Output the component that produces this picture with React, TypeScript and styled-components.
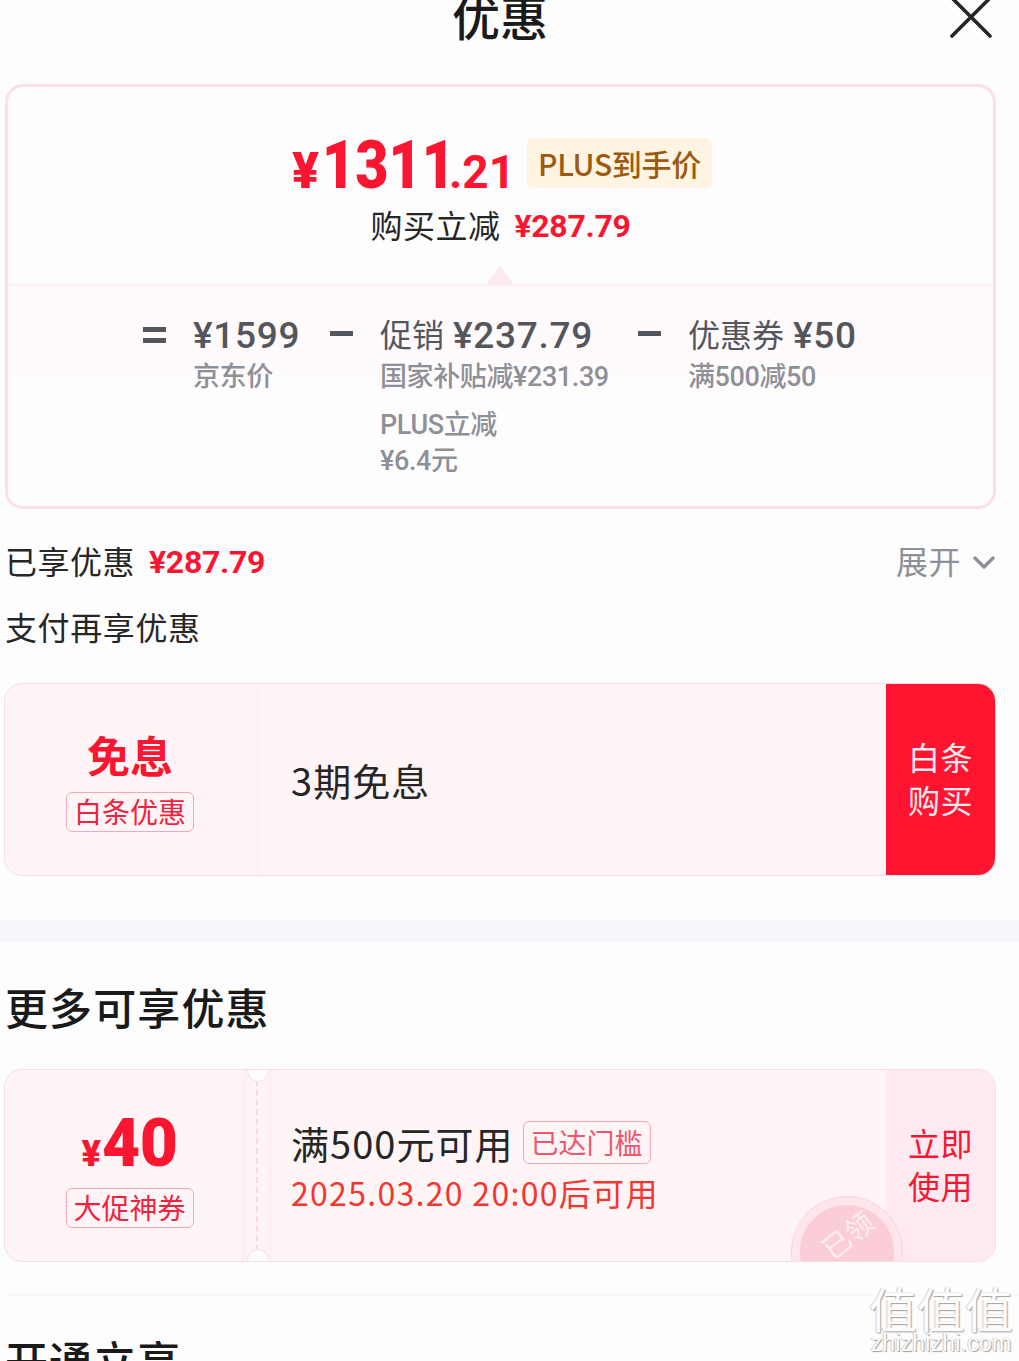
import React from "react";
import styled, { createGlobalStyle } from "styled-components";

const Global = createGlobalStyle`
  html, body { margin: 0; padding: 0; background: #fdfdfe; }
  body {
    font-family: "Noto Sans CJK SC", "Noto Sans", sans-serif;
    color: #1a1a1a;
  }
`;

const NUM = `"Roboto", "Noto Sans CJK SC", sans-serif`;

const Page = styled.div`
  position: relative;
  width: 1019px;
  height: 1361px;
  overflow: hidden;
`;

const Header = styled.header`
  height: 84px;
  padding-right: 19px;
  display: flex;
  justify-content: center;
  position: relative;
`;

const Title = styled.h1`
  margin: -21px 0 0;
  font-size: 48px;
  line-height: 72px;
  font-weight: 500;
  height: 72px;
`;

const CloseIcon = styled.svg`
  position: absolute;
  right: 26px;
  top: -5px;
  width: 44px;
  height: 44px;
`;

const SummaryCard = styled.section`
  margin: 0 23px 0 5px;
  height: 425px;
  box-sizing: border-box;
  border: 3px solid #fcdfe7;
  border-radius: 18px;
  overflow: hidden;
  display: flex;
  flex-direction: column;
`;

const SummaryTop = styled.div`
  height: 197px;
  flex: none;
  box-sizing: border-box;
  padding-top: 45px;
  display: flex;
  flex-direction: column;
  align-items: center;
`;

const PriceRow = styled.div`
  display: flex;
  align-items: center;
  height: 62px;
  padding-left: 3px;
`;

const Price = styled.div`
  display: flex;
  align-items: baseline;
  margin-top: 12px;
  color: #fa1530;
  font-family: ${NUM};
  font-weight: 900;
  line-height: 62px;
`;

const PriceSymbol = styled.span`
  font-size: 50px;
  width: 30px;
`;

const PriceInt = styled.span`
  display: inline-block;
  width: 127px;
  font-size: 66px;
  white-space: nowrap;
  transform: scaleX(0.87);
  transform-origin: left;
`;

const PriceDec = styled.span`
  display: inline-block;
  width: 63px;
  font-size: 46px;
  font-weight: 700;
  white-space: nowrap;
`;

const Tag = styled.div`
  margin-left: 15px;
  width: 185px;
  height: 50px;
  border-radius: 6px;
  background: #fff3e2;
  color: #9c5a10;
  font-size: 30px;
  line-height: 50px;
  text-align: center;
  font-weight: 500;
  letter-spacing: -0.3px;
  white-space: nowrap;
`;

const SaveRow = styled.div`
  margin-top: 5px;
  display: flex;
  align-items: center;
  gap: 14px;
  font-size: 32px;
  line-height: 46px;
  letter-spacing: 0.5px;
  color: #262626;
`;

const RedAmount = styled.span`
  padding-top: 4px;
  color: #fa1530;
  font-family: ${NUM};
  font-weight: 700;
  font-size: 32px;
  letter-spacing: -0.3px;
`;

const SummaryBottom = styled.div`
  position: relative;
  flex: 1;
  border-top: 2px solid #fdeff3;
  background: linear-gradient(#fff8fa, #fefdfe 60%);
  padding: 27px 0 0 135px;
  display: flex;
  align-items: flex-start;
`;

const Caret = styled.div`
  position: absolute;
  left: 478px;
  top: -20px;
  width: 0;
  height: 0;
  border-left: 14px solid transparent;
  border-right: 14px solid transparent;
  border-bottom: 19px solid #fdeaf0;
`;

const Op = styled.div`
  flex: none;
  width: 50px;
  height: 46px;
`;

const OpBar = styled.div<{ $double?: boolean }>`
  width: 23px;
  height: ${(p) => (p.$double ? "16px" : "5px")};
  margin-top: ${(p) => (p.$double ? "14px" : "18px")};
  border-top: 5px solid #54565c;
  border-bottom: ${(p) => (p.$double ? "5px solid #54565c" : "none")};
  box-sizing: border-box;
`;

const Col = styled.div<{ $width: number }>`
  flex: none;
  width: ${(p) => p.$width}px;
`;

const ColTitle = styled.div`
  display: flex;
  gap: 9px;
  font-size: 32px;
  line-height: 46px;
  height: 46px;
  color: #54565c;
  white-space: nowrap;
  font-weight: 400;
`;

const ColLabel = styled.span`
  margin-top: -3px;
`;

const ColAmount = styled.span`
  font-family: ${NUM};
  font-weight: 500;
  font-size: 37px;
  letter-spacing: 0.7px;
`;

const ColNote = styled.div<{ $gap?: number }>`
  margin-top: ${(p) => p.$gap ?? 0}px;
  font-size: 27px;
  line-height: 36px;
  color: #8e9097;
  white-space: nowrap;
  font-weight: 500;
  font-family: ${NUM};
  letter-spacing: -0.4px;
`;

const RowLine = styled.div`
  margin: 28px 23px 0 5px;
  height: 46px;
  display: flex;
  align-items: center;
  font-size: 32px;
  line-height: 46px;
  letter-spacing: 0.5px;
  color: #262626;
`;

const Expand = styled.div`
  margin-left: auto;
  display: flex;
  align-items: center;
  gap: 12px;
  color: #8e9097;
`;

const ChevronIcon = styled.svg`
  width: 22px;
  height: 13px;
  margin: 5px 1px 0 0;
`;

const SavedAmount = styled(RedAmount)`
  margin-left: 14px;
`;

const PlainLine = styled.div`
  margin: 20px 0 0 5px;
  font-size: 32px;
  line-height: 46px;
  letter-spacing: 0.6px;
  color: #262626;
`;

const Coupon = styled.div<{ $top: number }>`
  position: relative;
  margin: ${(p) => p.$top}px 23px 0 4px;
  height: 193px;
  box-sizing: border-box;
  border: 1px solid #f8dce4;
  border-radius: 18px;
  background: #fff5f7;
  overflow: hidden;
  display: flex;
`;

const CouponLeft = styled.div`
  flex: none;
  width: 253px;
  box-sizing: border-box;
  padding-right: 2px;
  border-right: 1px dashed #fbe3ea;
  display: flex;
  flex-direction: column;
  align-items: center;
  justify-content: center;
`;

const Ticket = styled(CouponLeft)`
  width: 237px;
  border-right: none;
  padding: 10px 0 0 12px;
`;

const Perforation = styled.div`
  flex: none;
  position: relative;
  width: 31px;
  background: linear-gradient(90deg, #fdf0f3, #fff5f7 45%, #fff5f7 55%, #fdf0f3);
  &::before {
    content: "";
    position: absolute;
    top: 10px;
    bottom: 10px;
    left: 14px;
    border-left: 2px dashed #fcd6e0;
  }
`;

const Notch = styled.div<{ $bottom?: boolean }>`
  position: absolute;
  left: 5px;
  ${(p) => (p.$bottom ? "bottom: -10px;" : "top: -10px;")}
  width: 20px;
  height: 20px;
  border-radius: 50%;
  background: #fdfdfe;
  border: 1px solid #f8dce4;
  z-index: 1;
`;

const BigLabel = styled.div`
  color: #fa1530;
  font-size: 43px;
  line-height: 52px;
  font-weight: 700;
`;

const BigAmount = styled.div`
  display: flex;
  align-items: baseline;
  color: #fa1530;
  font-family: ${NUM};
  font-weight: 900;
  line-height: 62px;
  height: 62px;
`;

const AmountSymbol = styled.span`
  font-size: 36px;
  margin-right: 1px;
`;

const AmountValue = styled.span`
  font-size: 66px;
  letter-spacing: -0.5px;
`;

const SmallTag = styled.div<{ $top: number }>`
  margin-top: ${(p) => p.$top}px;
  width: 128px;
  height: 40px;
  box-sizing: border-box;
  border: 1px solid #f3a8bb;
  border-radius: 6px;
  color: #f0223f;
  font-size: 28px;
  line-height: 37px;
  text-align: center;
  white-space: nowrap;
`;

const CouponBody = styled.div<{ $pad: number }>`
  flex: 1;
  padding-left: ${(p) => p.$pad}px;
  display: flex;
  flex-direction: column;
  justify-content: center;
  position: relative;
`;

const BodyText = styled.div`
  font-size: 38px;
  line-height: 52px;
  letter-spacing: 1.05px;
  color: #262626;
  display: flex;
  align-items: center;
  white-space: nowrap;
`;

const Threshold = styled.span`
  margin-left: 9px;
  width: 128px;
  height: 43px;
  box-sizing: border-box;
  border: 1px solid #f3a8bb;
  border-radius: 6px;
  font-size: 28px;
  line-height: 40px;
  letter-spacing: 0;
  text-align: center;
  color: #f0576c;
`;

const DateText = styled.div`
  font-size: 32px;
  line-height: 46px;
  letter-spacing: 1.3px;
  color: #f5352f;
  white-space: nowrap;
`;

const Action = styled.div<{ $solid?: boolean }>`
  flex: none;
  width: 109px;
  background: ${(p) => (p.$solid ? "#ff1530" : "#feeaf0")};
  color: ${(p) => (p.$solid ? "#ffe9ec" : "#fa1530")};
  font-size: 32px;
  line-height: 43px;
  text-align: center;
  display: flex;
  align-items: center;
  justify-content: center;
  padding-bottom: 4px;
  box-sizing: border-box;
  letter-spacing: 0.5px;
`;

const Stamp = styled.div`
  position: absolute;
  left: 787px;
  top: 127px;
  width: 110px;
  height: 110px;
  box-sizing: border-box;
  border-radius: 50%;
  border: 8px solid #fee6ec;
  box-shadow: 0 0 0 1px #fbd3dd;
  background: #fbcdd8;
  padding-top: 9px;
  z-index: 1;
`;

const StampText = styled.div`
  color: #fdeef2;
  font-size: 28px;
  line-height: 40px;
  text-align: center;
  transform: rotate(-38deg);
  white-space: nowrap;
`;

const Band = styled.div`
  margin-top: 44px;
  height: 22px;
  background: #f7f8fb;
`;

const SectionTitle = styled.h2<{ $top: number }>`
  margin: ${(p) => p.$top}px 0 0 5px;
  font-size: 43px;
  line-height: 54px;
  font-weight: 500;
  letter-spacing: 1.1px;
`;

const Hairline = styled.div`
  margin: 33px 0 0 6px;
  height: 1px;
  background: #f7f7f9;
`;

const Watermark = styled.div`
  position: absolute;
  right: 6px;
  bottom: 7px;
  width: 144px;
  text-align: center;
  color: #fcfcfc;
  text-shadow: 1px 1px 1px #9f9f9f, -1px 0 0 #d0d0d0;
`;

const WatermarkMark = styled.div`
  font-size: 48px;
  line-height: 50px;
  white-space: nowrap;
`;

const WatermarkUrl = styled.div`
  font-family: "Liberation Sans", sans-serif;
  font-size: 23px;
  line-height: 22px;
  letter-spacing: 0.2px;
  white-space: nowrap;
`;

export default function App() {
  return (
    <Page>
      <Global />
      <Header>
        <Title>优惠</Title>
        <CloseIcon viewBox="0 0 44 44" fill="none" stroke="#262626" strokeWidth="3.6" strokeLinecap="round">
          <path d="M3 3 L41 41 M41 3 L3 41" />
        </CloseIcon>
      </Header>

      <SummaryCard>
        <SummaryTop>
          <PriceRow>
            <Price>
              <PriceSymbol>¥</PriceSymbol>
              <PriceInt>1311</PriceInt>
              <PriceDec>.21</PriceDec>
            </Price>
            <Tag>PLUS到手价</Tag>
          </PriceRow>
          <SaveRow>
            购买立减
            <RedAmount>¥287.79</RedAmount>
          </SaveRow>
        </SummaryTop>
        <SummaryBottom>
          <Caret />
          <Op>
            <OpBar $double />
          </Op>
          <Col $width={137}>
            <ColTitle>
              <ColAmount>¥1599</ColAmount>
            </ColTitle>
            <ColNote>京东价</ColNote>
          </Col>
          <Op>
            <OpBar />
          </Op>
          <Col $width={258}>
            <ColTitle>
              <ColLabel>促销</ColLabel>
              <ColAmount>¥237.79</ColAmount>
            </ColTitle>
            <ColNote>国家补贴减¥231.39</ColNote>
            <ColNote $gap={12}>PLUS立减</ColNote>
            <ColNote>¥6.4元</ColNote>
          </Col>
          <Op>
            <OpBar />
          </Op>
          <Col $width={200}>
            <ColTitle>
              <ColLabel>优惠券</ColLabel>
              <ColAmount>¥50</ColAmount>
            </ColTitle>
            <ColNote>满500减50</ColNote>
          </Col>
        </SummaryBottom>
      </SummaryCard>

      <RowLine>
        已享优惠
        <SavedAmount>¥287.79</SavedAmount>
        <Expand>
          展开
          <ChevronIcon viewBox="0 0 22 13" fill="none" stroke="#8e9097" strokeWidth="3.4" strokeLinecap="round" strokeLinejoin="round">
            <path d="M2 2 L11 11 L20 2" />
          </ChevronIcon>
        </Expand>
      </RowLine>
      <PlainLine>支付再享优惠</PlainLine>

      <Coupon $top={34}>
        <CouponLeft>
          <BigLabel>免息</BigLabel>
          <SmallTag $top={12}>白条优惠</SmallTag>
        </CouponLeft>
        <CouponBody $pad={33}>
          <BodyText>3期免息</BodyText>
        </CouponBody>
        <Action $solid>
          白条
          <br />
          购买
        </Action>
      </Coupon>

      <Band />
      <SectionTitle $top={37}>更多可享优惠</SectionTitle>

      <Coupon $top={36}>
        <Ticket>
          <BigAmount>
            <AmountSymbol>¥</AmountSymbol>
            <AmountValue>40</AmountValue>
          </BigAmount>
          <SmallTag $top={13}>大促神券</SmallTag>
        </Ticket>
        <Perforation>
          <Notch />
          <Notch $bottom />
        </Perforation>
        <CouponBody $pad={18}>
          <BodyText>
            满500元可用
            <Threshold>已达门槛</Threshold>
          </BodyText>
          <DateText>2025.03.20 20:00后可用</DateText>
        </CouponBody>
        <Action>
          立即
          <br />
          使用
        </Action>
        <Stamp>
          <StampText>已领</StampText>
        </Stamp>
      </Coupon>

      <Hairline />
      <SectionTitle $top={36}>开通立享</SectionTitle>

      <Watermark>
        <WatermarkMark>值值值</WatermarkMark>
        <WatermarkUrl>zhizhizhi.com</WatermarkUrl>
      </Watermark>
    </Page>
  );
}
